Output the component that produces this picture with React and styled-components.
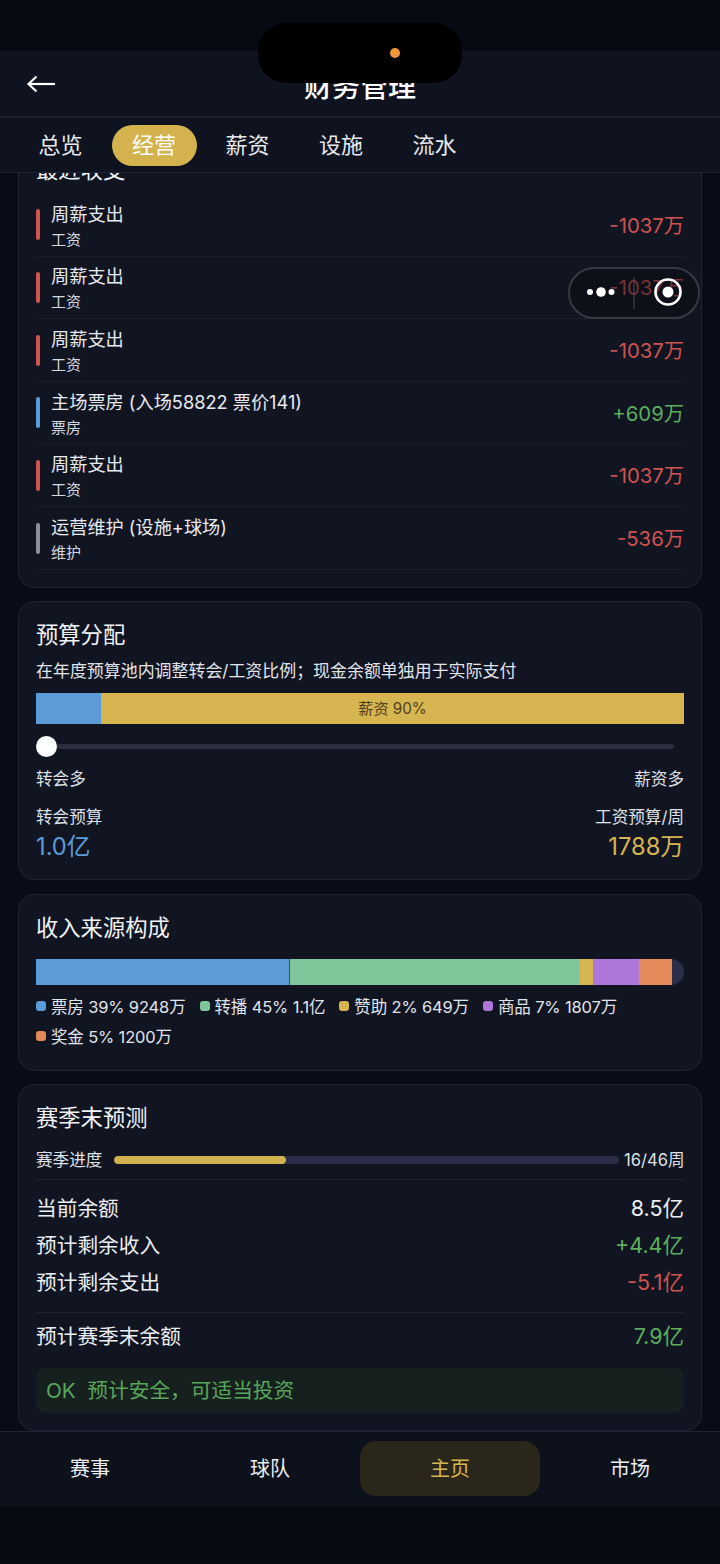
import React from "react";
import styled, { createGlobalStyle } from "styled-components";

const Global = createGlobalStyle`
  html, body { margin: 0; padding: 0; background: #070a13; }
  * { box-sizing: border-box; }
  body { font-family: Inter, "Noto Sans CJK SC", "Noto Sans", sans-serif; color: #e8eaf0; }
`;

const Phone = styled.div`
  position: relative; width: 720px; height: 1564px; overflow: hidden;
  display: flex; flex-direction: column; background: #090c16;
`;
const StatusBar = styled.div`height: 51px; flex: none; background: #070a13;`;
const Island = styled.div`
  position: absolute; left: 258px; top: 23px; width: 204px; height: 60px; border-radius: 28px;
  background: #000; z-index: 5;
`;
const IslandDot = styled.span`
  position: absolute; left: 132px; top: 25px; width: 10px; height: 10px; border-radius: 50%; background: #f0943c;
`;
const Header = styled.header`
  flex: none; height: 67px; background: #0f131f; border-bottom: 2px solid #1d2130;
  display: flex; align-items: center; justify-content: center; position: relative;
`;
const BackBtn = styled.button`
  position: absolute; left: 26px; top: 24px; padding: 0; background: none; border: 0; display: flex; color: #fff;
`;
const Title = styled.h1`
  margin: 6px 0 0; font-size: 28px; line-height: 36px; font-weight: 500; color: #fff;
`;
const Tabs = styled.nav`
  flex: none; height: 55px; background: #0f131f; border-bottom: 1px solid #1d2130;
  display: flex; align-items: center; gap: 8.5px; padding: 1px 18px 0;
`;
const Tab = styled.div`
  width: 85px; height: 41px; border-radius: 21px; font-size: 22px; padding-bottom: 5px;
  display: flex; align-items: center; justify-content: center;
  background: ${p => (p.$active ? "#d4b34f" : "transparent")};
  color: ${p => (p.$active ? "#fff" : "#e8eaf0")};
`;
const Scroller = styled.main`flex: 1; min-height: 0; overflow: hidden;`;
const Stack = styled.div`
  margin-top: -37px; padding: 0 18px; display: flex; flex-direction: column; gap: 13.4px;
`;
const Card = styled.section`
  background: #111522; border: 1px solid #1f2333; border-radius: 16px; padding: 17px 17px ${p => p.$pb || 17}px;
`;
const CardTitle = styled.h2`
  margin: 0 0 -2px; font-size: 22.3px; line-height: 32px; font-weight: 400; color: #f2f3f6;
`;
const TxList = styled.div`margin-top: 10px;`;
const TxRow = styled.div`
  height: 62.67px; display: flex; align-items: center; border-bottom: 1px solid #1b1f2e;
`;
const TxBar = styled.span`
  width: 4px; height: 31px; border-radius: 2px; background: ${p => p.$color}; margin-right: 11px; flex: none;
`;
const TxBody = styled.div`flex: 1; padding-top: 4px;`;
const TxName = styled.div`font-size: 18.2px; line-height: 24px; margin-bottom: 2px; color: #e8eaf0;`;
const TxType = styled.div`font-size: 15px; line-height: 24px; color: #d6d8df;`;
const TxAmount = styled.div`font-size: 20.3px; margin-bottom: 2px; color: ${p => p.$color};`;
const Desc = styled.p`margin: 10px 0; font-size: 16.95px; line-height: 24px; color: #e2e4ea; white-space: nowrap;`;
const SplitBar = styled.div`display: flex; height: 31px;`;
const SplitBlue = styled.div`width: 65px; background: #5b9bd8;`;
const SplitGold = styled.div`
  flex: 1; background: #d6b44f; color: #4e431f; font-size: 15.2px; padding-bottom: 3px;
  display: flex; align-items: center; justify-content: center;
`;
const Slider = styled.div`position: relative; height: 21px; margin-top: 12px; display: flex; align-items: center;`;
const SliderTrack = styled.div`width: 638px; height: 5px; border-radius: 3px; background: #2a2e3f;`;
const SliderThumb = styled.span`
  position: absolute; left: 0; top: 0; width: 21px; height: 21px; border-radius: 50%; background: #fff;
`;
const Between = styled.div`
  display: flex; justify-content: space-between; margin-top: ${p => p.$mt || 0}px;
`;
const SmallText = styled.span`font-size: 16.6px; line-height: 22px; color: #dfe1e7; white-space: nowrap; flex: none;`;
const ValueCol = styled.div`display: flex; flex-direction: column; align-items: ${p => p.$end ? "flex-end" : "flex-start"}; gap: 4px;`;
const BigValue = styled.span`font-size: 23.7px; line-height: 30px; color: ${p => p.$color};`;
const IncomeBar = styled.div`
  display: flex; height: 26px; margin-top: 17px; background: #2a2e4a; border-radius: 0 13px 13px 0; overflow: hidden;
`;
const IncomeSeg = styled.div`
  width: ${p => p.$w}px; background: ${p => p.$color}; flex: none;
  border-left: ${p => (p.$line ? "1px solid #2b5a5a" : "none")};
`;
const Legend = styled.div`display: flex; flex-wrap: wrap; column-gap: 14px; margin-top: 6px;`;
const LegendItem = styled.div`
  display: flex; align-items: center; gap: 5px; height: 30px; font-size: 16.5px; letter-spacing: -0.15px;
  color: #e2e4ea; white-space: nowrap;
`;
const LegendDot = styled.span`width: 10px; height: 10px; border-radius: 3px; background: ${p => p.$color};`;
const ProgressRow = styled.div`display: flex; align-items: center; margin-top: 17px; height: 22px;`;
const ProgressTrack = styled.div`
  width: 505px; height: 8px; margin: 0 5px 0 11.6px; border-radius: 4px; background: #282c47; overflow: hidden; flex: none;
`;
const ProgressFill = styled.div`height: 100%; border-radius: 4px; background: #d2b24f;`;
const Rule = styled.hr`margin: ${p => p.$m}; border: 0; height: 1px; background: #1f2333;`;
const StatRow = styled.div`
  height: 37px; display: flex; align-items: center; justify-content: space-between; font-size: 20.7px; color: #eceef2;
`;
const StatValue = styled.span`font-size: 21.5px; color: ${p => p.$color || "#eceef2"};`;
const Notice = styled.div`
  margin-top: 15px; height: 45px; border-radius: 10px; background: #16211f; color: #58a65a;
  font-size: 20.7px; padding: 0 10px 3px; display: flex; align-items: center; white-space: pre;
`;
const BottomNav = styled.nav`
  flex: none; height: 75px; background: #0d111c; border-top: 1px solid #1f2333;
  display: grid; grid-template-columns: repeat(4, 180px); padding: 9px 0 10px;
`;
const NavItem = styled.div`
  display: flex; align-items: center; justify-content: center; border-radius: 16px; font-size: 20px; padding-bottom: 3px;
  background: ${p => (p.$active ? "#2a2619" : "transparent")};
  color: ${p => (p.$active ? "#d6b44f" : "#eceef2")};
`;
const HomeArea = styled.div`flex: none; height: 58px; background: #070a13;`;
const Capsule = styled.div`
  position: absolute; left: 568px; top: 267px; width: 132px; height: 52px; border-radius: 26px; z-index: 5;
  background: rgba(8, 9, 15, 0.45); border: 2px solid #363a45; display: flex;
`;
const CapsuleIcon = styled.svg`position: absolute; left: -2px; top: -2px;`;

const RED = "#d2524f", GREEN = "#5cae5c", BLUE = "#5b9bd8", GREY = "#8d8f9b";
const txs = [
  ["周薪支出", "工资", "-1037万", RED, RED],
  ["周薪支出", "工资", "-1037万", RED, RED],
  ["周薪支出", "工资", "-1037万", RED, RED],
  ["主场票房 (入场58822 票价141)", "票房", "+609万", BLUE, GREEN],
  ["周薪支出", "工资", "-1037万", RED, RED],
  ["运营维护 (设施+球场)", "维护", "-536万", GREY, RED],
];
const segs = [
  [252.7, "#5b9bd8"], [291.3, "#7fc59a", true], [13.5, "#d6b44f"], [45.5, "#ad76d8"], [32.7, "#e48a5a"],
];
const legend = [
  ["票房 39% 9248万", "#5b9bd8"], ["转播 45% 1.1亿", "#7fc59a"], ["赞助 2% 649万", "#d6b44f"],
  ["商品 7% 1807万", "#ad76d8"], ["奖金 5% 1200万", "#e48a5a"],
];

export default function App() {
  return (
    <Phone>
      <Global />
      <Island><IslandDot /></Island>
      <Capsule>
        <CapsuleIcon width="132" height="52" viewBox="0 0 132 52">
          <circle cx="22" cy="25" r="3" fill="#fff" />
          <circle cx="33" cy="25" r="4.8" fill="#fff" />
          <circle cx="43.5" cy="25" r="3" fill="#fff" />
          <line x1="66" y1="10" x2="66" y2="42" stroke="#4b4e58" strokeWidth="1" />
          <circle cx="100" cy="25" r="12.5" fill="none" stroke="#fff" strokeWidth="2.6" />
          <circle cx="100" cy="25" r="5.5" fill="#fff" />
        </CapsuleIcon>
      </Capsule>
      <StatusBar />
      <Header>
        <BackBtn aria-label="返回">
          <svg width="30" height="18" viewBox="0 0 30 18" fill="none" stroke="#fff" strokeWidth="2.2">
            <path d="M29 9H3" />
            <path d="M10.5 1.5 2.5 9l8 7.5" />
          </svg>
        </BackBtn>
        <Title>财务管理</Title>
      </Header>
      <Tabs>
        {["总览", "经营", "薪资", "设施", "流水"].map(t => (
          <Tab key={t} $active={t === "经营"}>{t}</Tab>
        ))}
      </Tabs>
      <Scroller>
        <Stack>
          <Card>
            <CardTitle>最近收支</CardTitle>
            <TxList>
              {txs.map((t, i) => (
                <TxRow key={i}>
                  <TxBar $color={t[3]} />
                  <TxBody>
                    <TxName>{t[0]}</TxName>
                    <TxType>{t[1]}</TxType>
                  </TxBody>
                  <TxAmount $color={t[4]}>{t[2]}</TxAmount>
                </TxRow>
              ))}
            </TxList>
          </Card>
          <Card>
            <CardTitle>预算分配</CardTitle>
            <Desc>在年度预算池内调整转会/工资比例；现金余额单独用于实际支付</Desc>
            <SplitBar>
              <SplitBlue />
              <SplitGold>薪资 90%</SplitGold>
            </SplitBar>
            <Slider>
              <SliderTrack />
              <SliderThumb />
            </Slider>
            <Between $mt={11}>
              <SmallText>转会多</SmallText>
              <SmallText>薪资多</SmallText>
            </Between>
            <Between $mt={16}>
              <ValueCol>
                <SmallText>转会预算</SmallText>
                <BigValue $color={BLUE}>1.0亿</BigValue>
              </ValueCol>
              <ValueCol $end>
                <SmallText>工资预算/周</SmallText>
                <BigValue $color="#d6b44f">1788万</BigValue>
              </ValueCol>
            </Between>
          </Card>
          <Card $pb={19}>
            <CardTitle>收入来源构成</CardTitle>
            <IncomeBar>
              {segs.map(s => <IncomeSeg key={s[1]} $w={s[0]} $color={s[1]} $line={s[2]} />)}
            </IncomeBar>
            <Legend>
              {legend.map(l => (
                <LegendItem key={l[0]}><LegendDot $color={l[1]} />{l[0]}</LegendItem>
              ))}
            </Legend>
          </Card>
          <Card>
            <CardTitle>赛季末预测</CardTitle>
            <ProgressRow>
              <SmallText>赛季进度</SmallText>
              <ProgressTrack><ProgressFill style={{ width: `${(16 / 46) * 100 - 0.8}%` }} /></ProgressTrack>
              <SmallText>16/46周</SmallText>
            </ProgressRow>
            <Rule $m="8px 0 8px" />
            <StatRow><span>当前余额</span><StatValue>8.5亿</StatValue></StatRow>
            <StatRow><span>预计剩余收入</span><StatValue $color={GREEN}>+4.4亿</StatValue></StatRow>
            <StatRow><span>预计剩余支出</span><StatValue $color={RED}>-5.1亿</StatValue></StatRow>
            <Rule $m="13px 0 3px" />
            <StatRow><span>预计赛季末余额</span><StatValue $color={GREEN}>7.9亿</StatValue></StatRow>
            <Notice>OK  预计安全，可适当投资</Notice>
          </Card>
        </Stack>
      </Scroller>
      <BottomNav>
        <NavItem>赛事</NavItem>
        <NavItem>球队</NavItem>
        <NavItem $active>主页</NavItem>
        <NavItem>市场</NavItem>
      </BottomNav>
      <HomeArea />
    </Phone>
  );
}
